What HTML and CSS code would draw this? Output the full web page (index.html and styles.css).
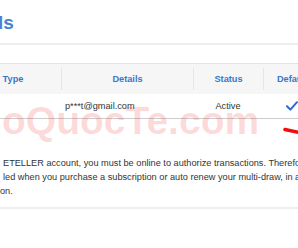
FILE: index.html
```html
<!doctype html>
<html lang="en">
<head>
	<meta charset="utf-8">
	<title>Payment Details</title>
	<meta name="viewport" content="width=device-width, initial-scale=1">
	<link rel="stylesheet" href="styles.css">
</head>
<body>

	<div class="page">
		<header class="title-bar">
			<h1 class="title">ls</h1>
		</header>

		<div class="methods">
			<div class="grid head">
				<div class="cell">Type</div>
				<div class="cell">Details</div>
				<div class="cell">Status</div>
				<div class="cell">Default</div>
			</div>
			<div class="grid row">
				<div class="cell"></div>
				<div class="cell email">p***t@gmail.com</div>
				<div class="cell">Active</div>
				<div class="cell">
					<svg class="check" width="12" height="10" viewBox="0 0 12 10">
						<path d="M1 5.2 L4.4 8.6 L11 1.2" fill="none" stroke="#2d69cc" stroke-width="2" stroke-linecap="round" stroke-linejoin="round"/>
					</svg>
				</div>
			</div>

			<!-- stamp and marker drawn over the screenshot -->
			<div class="watermark">oQuocTe.com</div>
			<svg class="marker" width="16" height="8" viewBox="0 0 16 8">
				<path d="M2 2.5 L16 5.5" stroke="#f20d0d" stroke-width="3.5" stroke-linecap="round"/>
			</svg>
		</div>

		<p class="note">
			ETELLER account, you must be online to authorize transactions. Therefore<br>
			led when you purchase a subscription or auto renew your multi-draw, in a<br>
			<span class="tail">on.</span>
		</p>

		<div class="rule"></div>
	</div>

</body>
</html>
```

FILE: styles.css
```css
html, body {
	margin: 0;
	padding: 0;
	overflow: hidden;
}
body {
	width: 298px;
	height: 248px;
	background: #fff;
	font-family: "Liberation Sans", Arial, Helvetica, sans-serif;
	color: #333;
}

/*****/

.title-bar {
	padding: 13px 0 10px;
	border-bottom: 2px solid #eeeeee;
}
.title {
	margin: 0 0 0 -2px;
	font-family: "Liberation Sans Narrow", "Liberation Sans", Arial, sans-serif;
	font-size: 19px;
	line-height: 20px;
	font-weight: 700;
	color: #4a82d3;
}

.methods {
	position: relative;
	margin: 18px 0 0 -35px;
	width: 360px;
}
.grid {
	display: grid;
	grid-template-columns: 96px 132px 70px 58px;
	font-size: 9.2px;
}
.head {
	padding: 4px 0;
	background: #f6f6f6;
	border-top: 1px solid #e3e3e3;
	font-weight: 700;
	color: #3a76c9;
}
.head .cell {
	height: 22px;
	line-height: 22px;
	text-align: center;
}
.head .cell + .cell {
	border-left: 1px solid #e6e6e6;
}
.row {
	height: 24px;
	border-bottom: 1px solid #cccccc;
	color: #333;
}
.row .cell {
	display: flex;
	align-items: center;
	justify-content: center;
}
.row .email {
	justify-content: flex-start;
	padding-left: 4px;
}
.check {
	display: block;
	margin-top: -1px;
}

.watermark {
	position: absolute;
	top: 39px;
	left: 37px;
	font-size: 39px;
	line-height: 38px;
	font-weight: 700;
	color: rgba(245, 60, 60, 0.19);
	white-space: nowrap;
	pointer-events: none;
}
.marker {
	position: absolute;
	top: 64px;
	left: 318px;
}

.note {
	margin: 37px 0 0 3px;
	font-size: 9.2px;
	line-height: 14px;
	color: #333;
	white-space: nowrap;
}
.tail {
	margin-left: -3px;
}

.rule {
	margin-top: 9px;
	border-top: 2px solid #eeeeee;
}
```
